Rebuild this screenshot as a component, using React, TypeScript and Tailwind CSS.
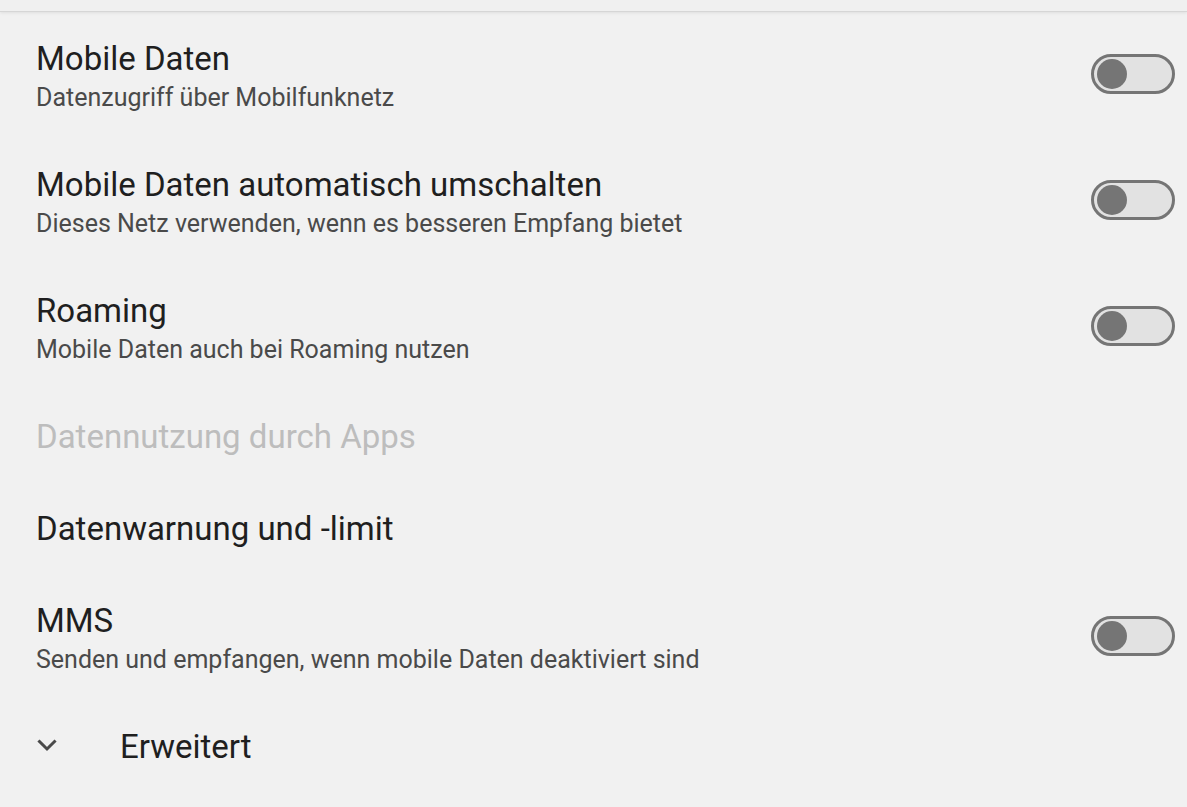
import React from "react";

function Toggle() {
  return (
    <div className="mt-[42px] mr-[12px] flex h-[40px] w-[84px] items-center rounded-full border-[3px] border-[#757575] bg-[#e2e2e2] pl-[3px]">
      <div className="h-[30px] w-[30px] rounded-full bg-[#757575]" />
    </div>
  );
}

function Row({ title, subtitle, toggle, disabled }: { title: string; subtitle?: string; toggle?: boolean; disabled?: boolean }) {
  return (
    <div className="flex items-start justify-between pl-[36px]">
      <div className="flex flex-col pt-[27px] pb-[25px]">
        <div className={`text-[33px] leading-[40px] ${disabled ? "text-[#bdbdbd]" : "text-[#1f1f1f]"}`}>{title}</div>
        {subtitle && <div className="mt-[4px] text-[25px] leading-[30px] text-[#4a4a4a]">{subtitle}</div>}
      </div>
      {toggle && <Toggle />}
    </div>
  );
}

export default function App() {
  return (
    <div className="h-[807px] w-[1187px] overflow-hidden bg-[#f1f1f1]" style={{ fontFamily: "Roboto, 'Noto Sans', sans-serif" }}>
      <div className="h-[12px] border-b border-[#d6d6d6] bg-[#f0f0f0] shadow-[0_1px_3px_rgba(0,0,0,0.08)]" />
      <Row title="Mobile Daten" subtitle="Datenzugriff über Mobilfunknetz" toggle />
      <Row title="Mobile Daten automatisch umschalten" subtitle="Dieses Netz verwenden, wenn es besseren Empfang bietet" toggle />
      <Row title="Roaming" subtitle="Mobile Daten auch bei Roaming nutzen" toggle />
      <Row title="Datennutzung durch Apps" disabled />
      <Row title="Datenwarnung und -limit" />
      <Row title="MMS" subtitle="Senden und empfangen, wenn mobile Daten deaktiviert sind" toggle />
      <div className="flex items-start pl-[37px] pt-[27px]">
        <div className="flex h-[40px] w-[83px] items-center pb-[3px]">
          <svg width="20" height="13" viewBox="0 0 20 13" fill="none" stroke="#4a4a4a" strokeWidth="3" strokeLinecap="square">
            <path d="M2.5 2.5L10 10L17.5 2.5" />
          </svg>
        </div>
        <div className="text-[33px] leading-[40px] text-[#1f1f1f]">Erweitert</div>
      </div>
    </div>
  );
}
